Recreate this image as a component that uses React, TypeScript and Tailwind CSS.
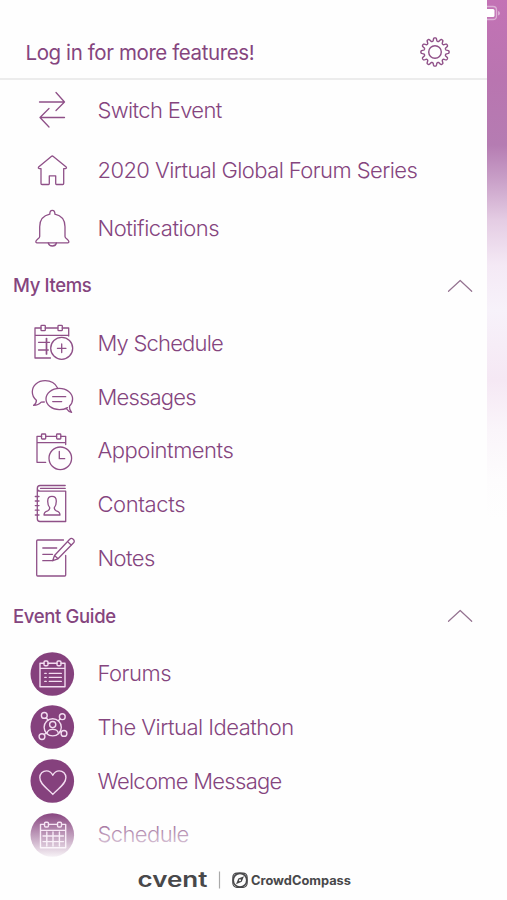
import React from 'react';

type IconProps = { children: React.ReactNode };

const LineIcon: React.FC<IconProps> = ({ children }) => (
  <svg width="50" height="50" viewBox="0 0 50 50" fill="none" stroke="#8f5088" strokeWidth="1.3" strokeLinecap="round" strokeLinejoin="round" className="shrink-0">
    {children}
  </svg>
);

const DiscIcon: React.FC<IconProps> = ({ children }) => (
  <svg width="50" height="50" viewBox="0 0 50 50" fill="none" stroke="#f3dcf1" strokeWidth="1.4" strokeLinecap="round" strokeLinejoin="round" className="shrink-0">
    <circle cx="25.3" cy="25" r="21.8" fill="#85417d" stroke="none" />
    {children}
  </svg>
);

const SwitchIcon = () => (
  <LineIcon>
    <path d="M12.5 17H37.5M29 7.5L37.5 17L29 25.5M37.5 32.5H13M22 23.5L13 32.5L22 42" />
  </LineIcon>
);

const HomeIcon = () => (
  <LineIcon>
    <path d="M24.3 10.4Q25.3 9.6 26.3 10.4L39.2 21Q40 22.4 38.6 22.6H36.7V37.5Q36.7 38.5 35.7 38.5H29.5Q28.7 38.5 28.7 37.5V29.8H22.3V37.5Q22.3 38.5 21.5 38.5H15Q14 38.5 14 37.5V22.6H12.2Q10.8 22.4 11.6 21Z" />
  </LineIcon>
);

const BellIcon = () => (
  <LineIcon>
    <path d="M22.8 11.2C22.8 8.8 23.7 7.4 25.3 7.4S27.9 8.8 27.9 11.2C34.5 12.6 38 17.6 38 23.8V33.5C38 35.6 41.8 36.6 41.9 38.8Q41.9 39.8 40.8 39.8H9.9Q8.8 39.8 8.8 38.8C8.9 36.6 12.7 35.6 12.7 33.5V23.8C12.7 17.6 16.2 12.6 22.8 11.2Z" />
    <path d="M21.3 40C21.8 42 23.2 43 25.3 43S29 42 29.4 40" />
  </LineIcon>
);

const MyScheduleIcon = () => (
  <LineIcon>
    <path d="M14 10H8V40H23.5M18.3 10H30.7M35.3 10H41.7V18M8 17.3H41.7" />
    <rect x="14" y="7.3" width="4.3" height="5.4" rx="0.8" />
    <rect x="31" y="7.3" width="4.3" height="5.4" rx="0.8" />
    <path d="M11.5 24.3H22.5M11.5 32H21.3" />
    <path d="M19.5 20.6V36" strokeWidth="1.7" />
    <circle cx="34.7" cy="30.3" r="11" />
    <path d="M30.4 30.3H39M34.7 26V34.6" />
  </LineIcon>
);

const MessagesIcon = () => (
  <LineIcon>
    <path d="M30.6 16C28.2 11.2 23.6 8.7 18.2 8.7C10.6 8.7 5.3 13.7 5.3 19.8C5.3 23.4 6.8 26.2 9.4 28.3C9.4 30.5 8.4 32.2 6.6 33.4C10 33.4 12.4 32.3 14.2 30.2L17.3 30" />
    <path d="M40.5 35.6C38.2 37 35.4 37.7 32.3 37.7C25 37.7 19 33 19 27S25 16.3 32.3 16.3S45.6 21 45.6 27C45.6 29.9 44.4 32.3 42.4 34.2C42.3 36.8 43 38.7 44.6 40.4C42.8 40 40.8 38.6 39.2 36.3" />
    <path d="M25.7 24.7H38.7M25.7 29.6H34.7" />
  </LineIcon>
);

const AppointmentsIcon = () => (
  <LineIcon>
    <path d="M14.7 10.3H10V36.3H18.7M18.7 10.3H29.7M33.7 10.3H38.7V18.5M10 16.7H38.7" />
    <rect x="14.5" y="8" width="4.2" height="5" rx="0.8" />
    <rect x="29.6" y="8" width="4.2" height="5" rx="0.8" />
    <circle cx="33.3" cy="32.3" r="11.3" />
    <path d="M32.3 25.5V32.7H37.7" />
  </LineIcon>
);

const ContactsIcon = () => (
  <LineIcon>
    <path d="M38.2 5.5H13.2C11.4 5.5 10.3 6.7 10.3 8.4S11.4 11.2 13.2 11.2H38.7V41.5H13C11.3 41.5 10.3 40.4 10.3 38.8V8.4M13.5 8.4H38.2" />
    <path d="M8.3 16.5H12M8.3 21H12M8.3 25.6H12M8.3 30.2H12M8.3 35H12" />
    <path d="M22.7 27.6C21 25.7 20.7 24 20.7 21.2C20.7 18.2 22.4 16.4 25 16.4S29.3 18.2 29.3 21.2C29.3 24 29 25.7 27.3 27.6C27.2 29.6 27.7 30.2 29.3 30.8C32 31.6 33 32.5 33 35H17C17 32.5 18 31.6 20.7 30.8C22.3 30.2 22.8 29.6 22.7 27.6Z" />
  </LineIcon>
);

const NotesIcon = () => (
  <LineIcon>
    <path d="M36.5 7H10.7Q9.7 7 9.7 8V42Q9.7 43 10.7 43H37.7Q38.7 43 38.7 42V22.5" />
    <path d="M15.8 15H29.7M15.8 21.3H25.5M15.8 27.7H25.7" />
    <path d="M25.7 27.7L27.5 22.5L42.7 6.3C43.6 5.2 45 5.2 46.2 6.2C47.5 7.3 47.6 8.7 46.6 9.8L31 25.8ZM40.6 8.6L44.4 12.2M27.5 22.5L31 25.8" />
  </LineIcon>
);

const ForumsIcon = () => (
  <DiscIcon>
    <path d="M17 14.2H13V37.7H38V14.2H34M21 14.2H30M13 19.4H38" />
    <rect x="17" y="12" width="4" height="4.8" rx="1.2" />
    <rect x="30" y="12" width="4" height="4.8" rx="1.2" />
    <path d="M22.3 24.4H34.3M22.3 28.4H34.3M22.3 32.4H34.3M17.8 24.4H19.2M17.8 28.4H19.2M17.8 32.4H19.2" />
  </DiscIcon>
);

const IdeathonIcon = () => (
  <DiscIcon>
    <circle cx="25.7" cy="25.3" r="8.6" />
    <circle cx="25.7" cy="22.6" r="3.1" />
    <path d="M20 31.5C20.3 28.8 22 27.4 25.7 27.4S31.1 28.8 31.4 31.5M19.1 15.7L21 18M33.2 16.8L31.4 18.8M17.2 32.6L19.3 30.8M34.3 30.1L33 29.4" />
    <circle cx="17.3" cy="13.4" r="2.9" />
    <circle cx="35.3" cy="14.7" r="2.9" />
    <circle cx="15" cy="34.6" r="2.9" />
    <circle cx="37" cy="31.4" r="2.9" />
  </DiscIcon>
);

const HeartIcon = () => (
  <DiscIcon>
    <path d="M25.8 19.3C24.3 16.3 22.2 14.9 19.5 14.9C15.6 14.9 12.8 17.7 12.8 21.6C12.8 28.5 20.5 32.3 25.8 38.4C31.1 32.3 38.9 28.5 38.9 21.6C38.9 17.7 36.1 14.9 32.2 14.9C29.5 14.9 27.3 16.3 25.8 19.3Z" />
  </DiscIcon>
);

const ScheduleIcon = () => (
  <DiscIcon>
    <path d="M17.5 14.4H13.5V37.7H38.7V14.4H35M21.5 14.4H30.5M13.5 20.4H38.7M16 26H36.5M16 31.6H36.5M19.8 22V36M26 22V36M32.4 22V36" />
    <rect x="17.5" y="12.2" width="4" height="4.8" rx="1.2" />
    <rect x="30.5" y="12.2" width="4" height="4.8" rx="1.2" />
  </DiscIcon>
);

const GEAR_TEETH = 12;

const gearPath = () => {
  const points: string[] = [];
  for (let i = 0; i < 240; i++) {
    const angle = (i / 240) * Math.PI * 2;
    const wave = Math.cos(angle * GEAR_TEETH);
    const radius = 12.5 + 1.7 * Math.tanh(wave * 1.8);
    points.push(`${(16 + radius * Math.sin(angle)).toFixed(2)} ${(16 - radius * Math.cos(angle)).toFixed(2)}`);
  }
  return `M${points.join('L')}Z`;
};

const GearIcon = () => (
  <svg width="32" height="32" viewBox="0 0 32 32" fill="none" stroke="#8f5088" strokeWidth="1.4" strokeLinejoin="round">
    <path d={gearPath()} />
    <circle cx="16" cy="16" r="6.3" />
  </svg>
);

const MAIN_ITEMS = [
  { label: 'Switch Event', icon: <SwitchIcon />, row: 'h-[60px]', text: 'tracking-[-0.65px]' },
  { label: '2020 Virtual Global Forum Series', icon: <HomeIcon />, row: 'h-[61px]', text: 'tracking-[-0.58px]' },
  { label: 'Notifications', icon: <BellIcon />, row: 'h-[54px]', text: 'tracking-[-0.48px]' },
];

const MY_ITEMS = [
  { label: 'My Schedule', icon: <MyScheduleIcon />, text: 'tracking-[-0.8px]' },
  { label: 'Messages', icon: <MessagesIcon />, text: 'tracking-[-0.8px]' },
  { label: 'Appointments', icon: <AppointmentsIcon />, text: 'tracking-[-0.48px]' },
  { label: 'Contacts', icon: <ContactsIcon />, text: 'tracking-[-0.4px]' },
  { label: 'Notes', icon: <NotesIcon />, text: 'tracking-[-0.6px]' },
];

const GUIDE_ITEMS = [
  { label: 'Forums', icon: <ForumsIcon />, text: 'tracking-[-0.5px]' },
  { label: 'The Virtual Ideathon', icon: <IdeathonIcon />, text: 'tracking-[-0.52px]' },
  { label: 'Welcome Message', icon: <HeartIcon />, text: 'tracking-[-0.72px]' },
  { label: 'Schedule', icon: <ScheduleIcon />, text: 'tracking-[-0.6px]' },
];

type MenuRowProps = { label: string; icon: React.ReactNode; row?: string; text: string };

const MenuRow: React.FC<MenuRowProps> = ({ label, icon, row = 'h-[53.75px]', text }) => (
  <li className={`flex items-center pl-[27px] ${row}`}>
    {icon}
    <span className={`ml-5 whitespace-nowrap pl-[0.5px] text-[22px] font-light ${text}`}>{label}</span>
  </li>
);

const SectionHeader: React.FC<{ title: string }> = ({ title }) => (
  <div className="flex h-[61.5px] items-center justify-between pl-[13px] pr-[14px]">
    <h2 className="pt-px text-[18.5px] font-medium tracking-[-0.35px]">{title}</h2>
    <svg width="26" height="14" viewBox="0 0 26 14" fill="none" stroke="#947290" strokeWidth="1.2" strokeLinecap="round" strokeLinejoin="round">
      <path d="M1.5 12.3L13.2 1.5L24.7 12.3" />
    </svg>
  </div>
);

const Footer = () => (
  <footer className="flex h-[40px] items-center pl-[137px]">
    <svg width="230" height="24" viewBox="0 0 230 24" fill="#48484a">
      <text x="0.5" y="19" fontFamily="Inter, sans-serif" fontSize="20.5" fontWeight="600" textLength="70" lengthAdjust="spacingAndGlyphs">cvent</text>
      <path d="M82.5 3.5V20.5" stroke="#a9a9a9" strokeWidth="1.2" />
      <rect x="95.9" y="5.1" width="14.2" height="14.2" rx="4" fill="none" stroke="#48484a" strokeWidth="1.2" />
      <circle cx="103" cy="12.2" r="6.8" fill="none" stroke="#48484a" strokeWidth="1.7" />
      <path d="M107 8.2L104.7 13.8L99 16.2L101.3 10.6Z" />
      <circle cx="103" cy="12.2" r="1" fill="#fff" />
      <text x="114" y="17" fontFamily="Inter, sans-serif" fontSize="12.5" fontWeight="700" textLength="100" lengthAdjust="spacingAndGlyphs">CrowdCompass</text>
    </svg>
  </footer>
);

export default function App() {
  return (
    <div className="flex h-[900px] w-[507px] overflow-hidden bg-[#fefefe] font-['Inter',sans-serif] text-[#85457e]">
      <div className="flex w-[487px] flex-col">
        <header className="flex h-[80px] shrink-0 items-center justify-between border-b-2 border-[#ececec] pl-[25.5px] pr-9 pt-[26px]">
          <h1 className="pt-[3px] text-[20.5px] font-normal tracking-[-0.4px]">Log in for more features!</h1>
          <GearIcon />
        </header>
        <main className="relative h-[780px] overflow-hidden">
          <ul>
            {MAIN_ITEMS.map((item) => (
              <MenuRow key={item.label} {...item} />
            ))}
          </ul>
          <SectionHeader title="My Items" />
          <ul>
            {MY_ITEMS.map((item) => (
              <MenuRow key={item.label} {...item} />
            ))}
          </ul>
          <SectionHeader title="Event Guide" />
          <ul>
            {GUIDE_ITEMS.map((item) => (
              <MenuRow key={item.label} {...item} />
            ))}
          </ul>
          <div className="absolute inset-x-0 bottom-0 h-[48px] bg-linear-to-b from-[#fefefe]/0 to-[#fefefe]" />
        </main>
        <Footer />
      </div>
      <aside className="flex-1 bg-[linear-gradient(to_bottom,#c372b5_0px,#b975b0_80px,#b57cb2_145px,#c9a0c8_180px,#e4cce3_220px,#f4e9f5_265px,#f7f2fa_310px,#f5e8f4_380px,#faf5fa_430px,#fdfcfd_480px,#fefefe_520px)]">
        <svg width="20" height="26" viewBox="0 0 20 26">
          <path d="M0 6.5H6Q9.5 6.5 9.5 10V16Q9.5 19.5 6 19.5H0" fill="none" stroke="#dcafd5" strokeWidth="1.3" />
          <path d="M0 9H6Q7.5 9 7.5 10.5V15.5Q7.5 17 6 17H0Z" fill="#fff" />
          <path d="M11 11V15.5Q13 15 13 13.2T11 11Z" fill="#dcafd5" />
        </svg>
      </aside>
    </div>
  );
}
